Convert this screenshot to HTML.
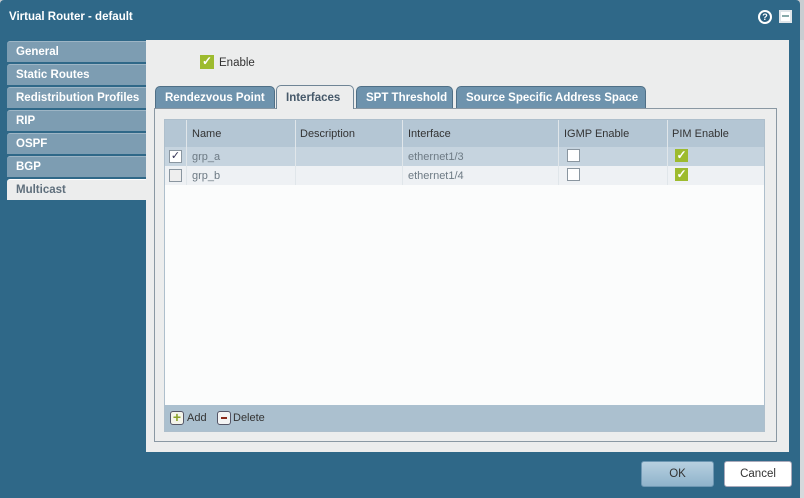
<!DOCTYPE html>
<html><head><style>
*{margin:0;padding:0;box-sizing:border-box}
body{width:804px;height:498px;background:#c9cdd1;font-family:"Liberation Sans",Tahoma,sans-serif;font-size:11px;position:relative;overflow:hidden;white-space:nowrap}
.dlg{position:absolute;left:0;top:0;width:800px;height:498px;background:#2f6888;border-radius:4px 4px 0 0}
.title{position:absolute;left:9px;top:11px;color:#fff;font-weight:bold;font-size:11.5px}
.panel{position:absolute;left:146px;top:40px;width:643px;height:412px;background:#eceded}
.nav{position:absolute;left:7px;width:139px;height:21px;background:#7d9db2;color:#fff;font-weight:bold;font-size:11.5px;padding:4px 0 0 9px;border-radius:3px 0 0 0;border-top:1px solid #9db5c5}
.nav.act{background:#eceded;color:#5f6f7c;border-top:1px solid #fff}
.abs{position:absolute}
.tab{position:absolute;top:86px;height:22px;background:#6e93ad;color:#fff;font-weight:bold;font-size:11.5px;padding:5px 0 0 9px;border-radius:5px 5px 0 0;border:1px solid #4f6f86;border-bottom:none}
.tab.act{background:#eceded;color:#46596a;top:85px;height:24px;border-color:#6f8596;padding-top:6px}
.tp{position:absolute;left:154px;top:108px;width:623px;height:334px;border:1px solid #8a98a3;background:#eceded}
.tbl{position:absolute;left:164px;top:119px;width:601px;height:313px;background:#fbfcfc;border:1px solid #aebfcc}
.hdr{position:absolute;left:0;top:0;width:599px;height:27px;background:#b4c6d4;color:#333}
.r1{position:absolute;left:0;top:27px;width:599px;height:19px;background:#c6d4df}
.r2{position:absolute;left:0;top:46px;width:599px;height:19px;background:#eef1f4}
.cl{position:absolute;top:0;width:1px;height:65px;background:#e0e6ea}
.tx{position:absolute;color:#333}
.g{color:#6d7a84}
.cb{position:absolute;width:13px;height:13px;background:#fff;border:1px solid #8a96a0}
.gc{position:absolute;width:13px;height:13px;background:#9dbb2e;color:#fff;font-size:12px;line-height:12px;text-align:center;font-weight:bold}
.tb{position:absolute;left:0;top:285px;width:599px;height:26px;background:#abc0cf}
.btn{position:absolute;top:461px;height:26px;border-radius:3px;text-align:center;line-height:25px;font-size:11.5px;color:#333}
</style></head><body>
<div class="dlg">
<div class="title">Virtual Router - default</div>
<div class="abs" style="left:758px;top:10px;width:14px;height:14px;border-radius:50%;background:#fff;"><div style="position:absolute;left:2px;top:2px;width:10px;height:10px;border-radius:50%;background:#2a5f80;color:#fff;font-size:9px;line-height:10px;text-align:center;font-weight:bold">?</div></div>
<div class="abs" style="left:779px;top:10px;width:13px;height:13px;background:#fff;border:2px solid #dfe5e9"><div style="margin:3px 1px 0;height:2px;background:#8aa"></div></div>
<div class="abs" style="left:800px;top:40px;width:4px;height:458px;background:#d6d9dc"></div>
<div class="panel"></div>
<div class="nav" style="top:41px">General</div>
<div class="nav" style="top:64px">Static Routes</div>
<div class="nav" style="top:87px">Redistribution Profiles</div>
<div class="nav" style="top:110px">RIP</div>
<div class="nav" style="top:133px">OSPF</div>
<div class="nav" style="top:156px">BGP</div>
<div class="nav act" style="top:179px">Multicast</div>
<div class="gc" style="left:200px;top:55px;width:14px;height:14px">✓</div>
<div class="tx" style="left:219px;top:57px;font-size:11.5px">Enable</div>
<div class="tp"></div>
<div class="tab" style="left:155px;width:120px">Rendezvous Point</div>
<div class="tab act" style="left:276px;width:78px">Interfaces</div>
<div class="tab" style="left:356px;width:97px">SPT Threshold</div>
<div class="tab" style="left:456px;width:190px">Source Specific Address Space</div>
<div class="tbl">
<div class="hdr"></div><div class="r1"></div><div class="r2"></div>
<div class="cl" style="left:21px"></div><div class="cl" style="left:130px"></div><div class="cl" style="left:237px"></div><div class="cl" style="left:393px"></div><div class="cl" style="left:502px"></div>
<div class="tx" style="left:27px;top:8px">Name</div>
<div class="tx" style="left:135px;top:8px">Description</div>
<div class="tx" style="left:243px;top:8px">Interface</div>
<div class="tx" style="left:399px;top:8px">IGMP Enable</div>
<div class="tx" style="left:507px;top:8px">PIM Enable</div>
<div class="cb" style="left:4px;top:30px;color:#335;font-size:11px;line-height:11px;text-align:center">✓</div>
<div class="cb" style="left:4px;top:49px;background:#eee"></div>
<div class="tx g" style="left:27px;top:31px">grp_a</div>
<div class="tx g" style="left:27px;top:50px">grp_b</div>
<div class="tx g" style="left:243px;top:31px">ethernet1/3</div>
<div class="tx g" style="left:243px;top:50px">ethernet1/4</div>
<div class="cb" style="left:402px;top:29px"></div>
<div class="cb" style="left:402px;top:48px"></div>
<div class="gc" style="left:510px;top:29px">✓</div>
<div class="gc" style="left:510px;top:48px">✓</div>
<div class="tb">
<div class="abs" style="left:5px;top:6px;width:14px;height:14px;border:1px solid #556;border-radius:3px;background:#f4f4ea;color:#8aa12a;font-weight:bold;font-size:14px;line-height:11px;text-align:center">+</div>
<div class="tx" style="left:22px;top:7px">Add</div>
<div class="abs" style="left:52px;top:6px;width:14px;height:14px;border:1px solid #556;border-radius:3px;background:#f4f4f4"><div style="margin:5px 3px 0;height:2px;background:#8a2a1a"></div></div>
<div class="tx" style="left:68px;top:7px">Delete</div>
</div>
</div>
<div class="btn" style="left:641px;width:73px;background:linear-gradient(#b7d0e0,#8fb3cb);border:1px solid #6d97b3">OK</div>
<div class="btn" style="left:724px;width:68px;background:#fff;border:1px solid #aab">Cancel</div>
</div>
</body></html>
